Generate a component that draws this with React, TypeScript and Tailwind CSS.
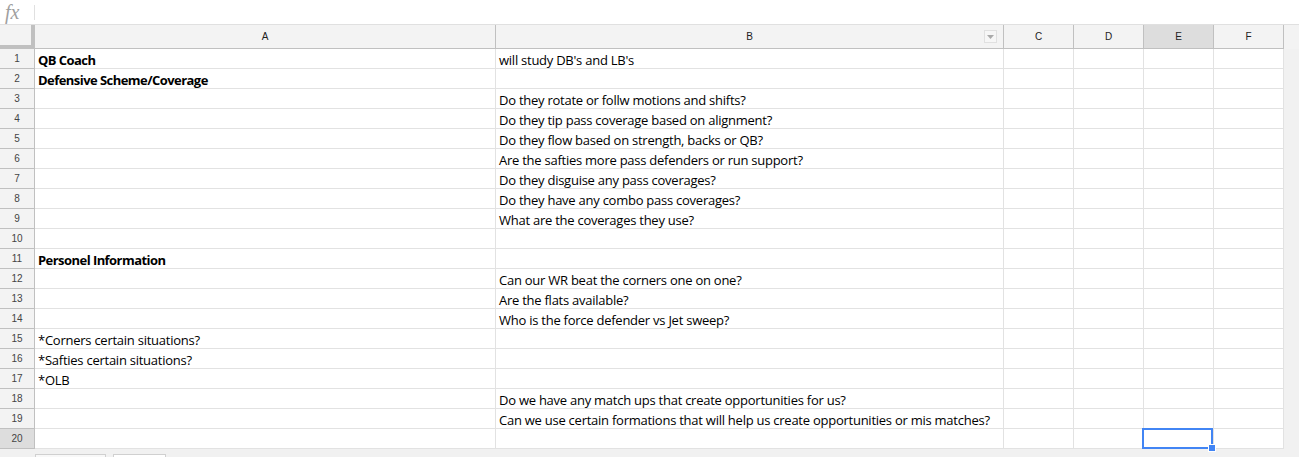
import React from "react";

type Row = { a?: string; b?: string };

const rows: Row[] = [
  { a: "QB Coach", b: "will study DB's and LB's" },
  { a: "Defensive Scheme/Coverage" },
  { b: "Do they rotate or follw motions and shifts?" },
  { b: "Do they tip pass coverage based on alignment?" },
  { b: "Do they flow based on strength, backs or QB?" },
  { b: "Are the safties more pass defenders or run support?" },
  { b: "Do they disguise any pass coverages?" },
  { b: "Do they have any combo pass coverages?" },
  { b: "What are the coverages they use?" },
  {},
  { a: "Personel Information" },
  { b: "Can our WR beat the corners one on one?" },
  { b: "Are the flats available?" },
  { b: "Who is the force defender vs Jet sweep?" },
  { a: "*Corners certain situations?" },
  { a: "*Safties certain situations?" },
  { a: "*OLB" },
  { b: "Do we have any match ups that create opportunities for us?" },
  { b: "Can we use certain formations that will help us create opportunities or mis matches?" },
  {},
];

const boldA = ["QB Coach", "Defensive Scheme/Coverage", "Personel Information"];

const cellFont = "font-['Open_Sans',sans-serif] text-[13px] text-black leading-[16px]";

function App() {
  return (
    <div className="w-[1299px] h-[457px] overflow-hidden bg-[#f1f1f1] font-['Liberation_Sans',Arial,sans-serif]">
      {/* formula bar */}
      <div className="h-[25px] bg-white border-b border-[#e0e0e0] flex items-center">
        <div className="w-[34px] h-full flex items-center pl-[5px]">
          <span className="font-['Liberation_Serif',serif] italic text-[20px] text-[#a0a0a0] leading-[22px]">
            fx
          </span>
        </div>
        <div className="w-px h-[15px] bg-[#e0e0e0]" />
      </div>

      {/* column headers */}
      <div className="flex h-[24px] bg-[#f3f3f3]">
        <div className="w-[35px] h-full border-r-[4px] border-b-[4px] border-[#c0c0c0] bg-[#f3f3f3]" />
        {[
          ["A", "w-[461px]", false],
          ["B", "w-[508px]", false],
          ["C", "w-[70px]", false],
          ["D", "w-[70px]", false],
          ["E", "w-[70px]", true],
          ["F", "w-[70px]", false],
        ].map(([label, w, sel]) => (
          <div
            key={label as string}
            className={`${w} h-full border-r border-b border-[#c0c0c0] flex items-center justify-center relative text-[10px] text-[#222] ${
              sel ? "bg-[#dddddd]" : "bg-[#f3f3f3]"
            }`}
          >
            {label}
            {label === "B" && (
              <div className="absolute right-[6px] top-[5px] w-[13px] h-[13px] border border-[#e0e0e0] bg-[#f6f6f6] flex items-center justify-center">
                <svg width="7" height="4" viewBox="0 0 7 4">
                  <path d="M0 0h7L3.5 4z" fill="#aaa" />
                </svg>
              </div>
            )}
          </div>
        ))}
      </div>

      {/* rows */}
      {rows.map((r, i) => {
        const last = i === rows.length - 1;
        const bold = boldA.includes(r.a ?? "");
        return (
          <div key={i} className="flex h-[20px]">
            <div
              className={`w-[35px] h-full border-r border-b border-[#c0c0c0] flex items-center justify-center text-[10px] text-[#444] ${
                last ? "bg-[#dddddd]" : "bg-[#f3f3f3]"
              }`}
            >
              {i + 1}
            </div>
            <div className="w-[461px] h-full bg-white border-r border-b border-[#e2e2e2] flex items-center pl-[3px] pt-[3px] overflow-hidden whitespace-nowrap">
              <span className={`${cellFont} ${bold ? "font-bold tracking-[-0.55px]" : "tracking-[-0.25px]"}`}>{r.a}</span>
            </div>
            <div className="w-[508px] h-full bg-white border-r border-b border-[#e2e2e2] flex items-center pl-[3px] pt-[3px] overflow-hidden whitespace-nowrap">
              <span className={`${cellFont} tracking-[-0.25px]`}>{r.b}</span>
            </div>
            <div className="w-[70px] h-full bg-white border-r border-b border-[#e2e2e2]" />
            <div className="w-[70px] h-full bg-white border-r border-b border-[#e2e2e2]" />
            <div className="w-[70px] h-full bg-white border-r border-b border-[#e2e2e2] relative">
              {last && (
                <>
                  <div className="absolute -left-[2px] -top-[1px] w-[71px] h-[21px] border-2 border-[#4285f4]" />
                  <div className="absolute right-[-3px] bottom-[-4px] w-[6px] h-[6px] bg-[#4285f4] border border-white box-content" />
                </>
              )}
            </div>
            <div className="w-[70px] h-full bg-white border-r border-b border-[#e2e2e2]" />
          </div>
        );
      })}

      {/* sheet tabs */}
      <div className="flex pl-[35px] gap-[7px] pt-[5px]">
        <div className="w-[71px] h-[10px] bg-[#f8f8f8] border border-[#d0d0d0]" />
        <div className="w-[53px] h-[10px] bg-white border border-[#d0d0d0]" />
      </div>
    </div>
  );
}

export default App;
